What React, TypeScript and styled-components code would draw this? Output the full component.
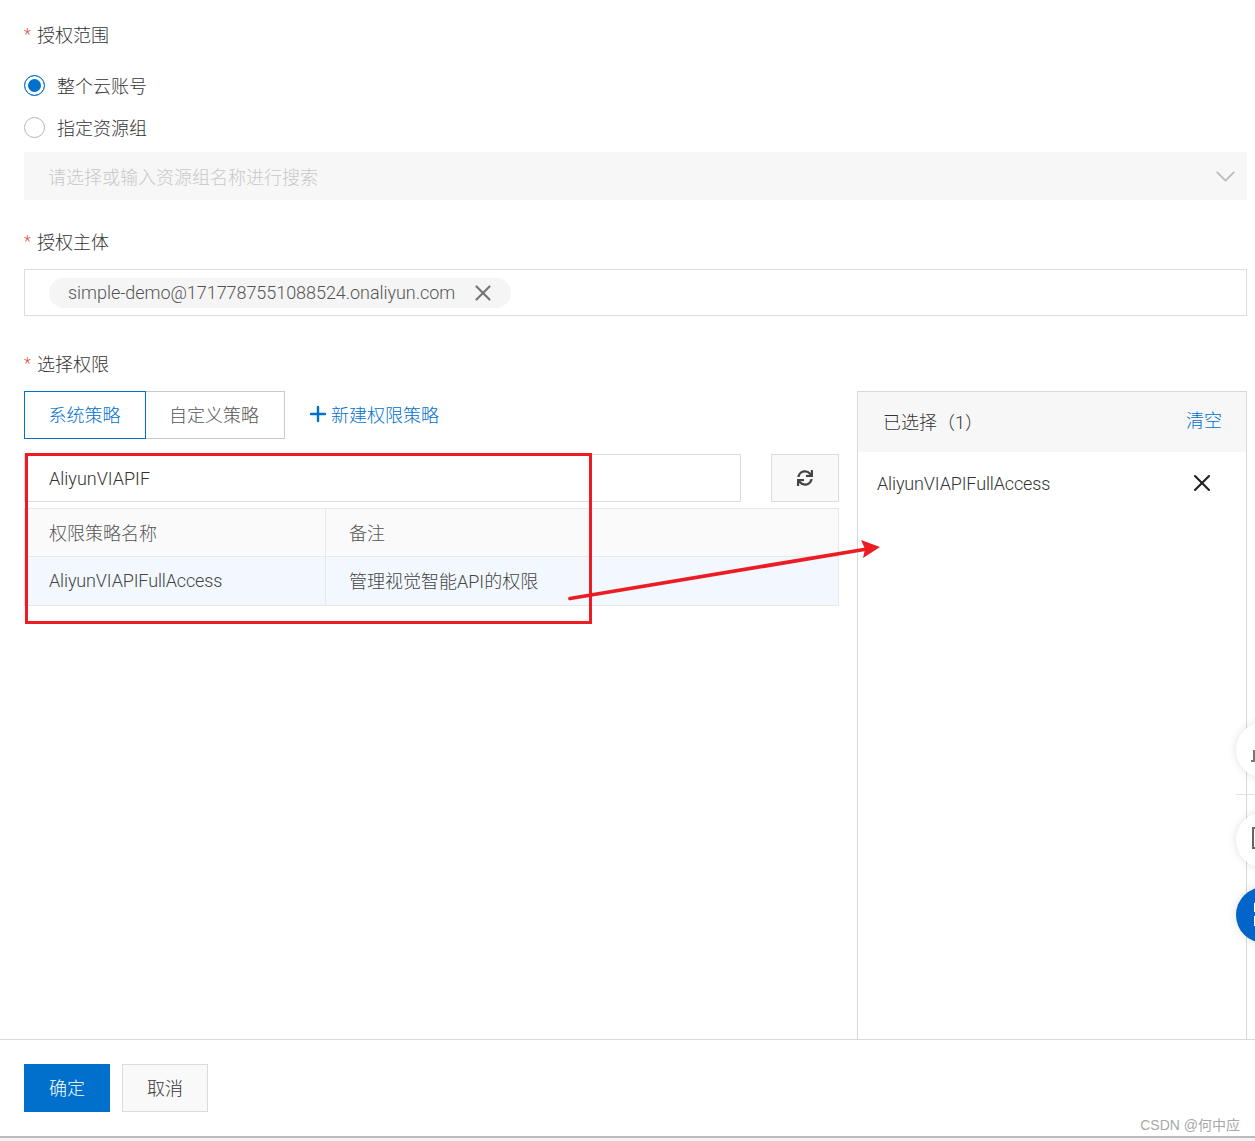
import React from "react";
import styled, { createGlobalStyle } from "styled-components";
import { ChevronDown, X, Plus } from "lucide-react";
import { FaSync } from "react-icons/fa";

const GlobalStyle = createGlobalStyle`
  html, body {
    margin: 0;
    padding: 0;
    background: #fff;
  }
  * { box-sizing: border-box; }
  body {
    font-family: Roboto, "Noto Sans CJK SC", sans-serif;
    font-size: 18px;
    font-weight: 300;
    color: #333;
  }
`;

export default function App() {
  return (
    <Page>
      <GlobalStyle />
      <Body>
        <FieldLabel>授权范围</FieldLabel>
        <RadioGroup>
          <RadioRow>
            <Radio $checked />
            整个云账号
          </RadioRow>
          <RadioRow>
            <Radio />
            指定资源组
          </RadioRow>
        </RadioGroup>
        <DisabledSelect>
          <SelectText>请选择或输入资源组名称进行搜索</SelectText>
          <ChevronDown size={33} strokeWidth={1.3} color="#bbb" />
        </DisabledSelect>

        <FieldLabel $top={30}>授权主体</FieldLabel>
        <TagInput>
          <Chip>
            <ChipText>simple-demo@1717787551088524.onaliyun.com</ChipText>
            <X size={26} strokeWidth={2} color="#777" />
          </Chip>
        </TagInput>

        <FieldLabel $top={36}>选择权限</FieldLabel>
        <PermissionArea>
          <LeftColumn>
            <TabRow>
              <Tab $active $width={122}>系统策略</Tab>
              <Tab $width={139}>自定义策略</Tab>
              <NewPolicyLink>
                <PlusIcon size={24} strokeWidth={2.4} />
                新建权限策略
              </NewPolicyLink>
            </TabRow>
            <SearchRow>
              <SearchInput>AliyunVIAPIF</SearchInput>
              <RefreshButton>
                <FaSync size={16} color="#444" />
              </RefreshButton>
            </SearchRow>
            <Table>
              <HeaderRow>
                <NameCell>权限策略名称</NameCell>
                <NoteCell>备注</NoteCell>
              </HeaderRow>
              <DataRow>
                <NameCell><Latin>AliyunVIAPIFullAccess</Latin></NameCell>
                <NoteCell>管理视觉智能API的权限</NoteCell>
              </DataRow>
            </Table>
          </LeftColumn>
          <SelectedPanel>
            <PanelHeader>
              <PanelTitle>已选择（1）</PanelTitle>
              <ClearLink>清空</ClearLink>
            </PanelHeader>
            <SelectedItem>
              <Latin>AliyunVIAPIFullAccess</Latin>
              <X size={28} strokeWidth={1.8} color="#222" />
            </SelectedItem>
          </SelectedPanel>
        </PermissionArea>
      </Body>
      <Footer>
        <PrimaryButton>确定</PrimaryButton>
        <CancelButton>取消</CancelButton>
      </Footer>
      <BottomStrip />

      {/* red markup drawn on top of the screenshot */}
      <RedBox />
      <ArrowLayer width="330" height="70" viewBox="0 0 330 70">
        <line x1="11" y1="60.5" x2="305" y2="11.5" stroke="#ed1c24" strokeWidth="3.8" strokeLinecap="round" />
        <polygon points="321,9 302,2 306,11 304,20" fill="#ed1c24" />
      </ArrowLayer>

      {/* floating help widgets cut off at the right edge */}
      <FloatCircle $top={722}>
        <svg width="19" height="56" viewBox="0 0 19 56">
          <rect x="17" y="28" width="2" height="11" fill="#777" />
          <rect x="15" y="38" width="4" height="2" fill="#777" />
        </svg>
      </FloatCircle>
      <FloatDivider />
      <FloatCircle $top={812}>
        <svg width="19" height="56" viewBox="0 0 19 56">
          <rect x="17" y="16" width="6" height="20" fill="none" stroke="#666" strokeWidth="2" />
        </svg>
      </FloatCircle>
      <FloatCircle $top={887} $blue>
        <svg width="19" height="56" viewBox="0 0 19 56">
          <rect x="18" y="16" width="4" height="9" fill="#fff" />
          <rect x="18" y="29" width="4" height="10" fill="#fff" />
        </svg>
      </FloatCircle>

      <Watermark>CSDN @何中应</Watermark>
    </Page>
  );
}

const Page = styled.div`
  position: relative;
  width: 1255px;
  height: 1141px;
  overflow: hidden;
  display: flex;
  flex-direction: column;
  background: #fff;
`;

const Body = styled.div`
  height: 1039px;
  padding: 23px 8px 0 24px;
  display: flex;
  flex-direction: column;
`;

const Latin = styled.span`
  letter-spacing: -0.14px;
`;

const ChipText = styled.span`
  letter-spacing: -0.05px;
`;

const FieldLabel = styled.div<{ $top?: number }>`
  margin-top: ${(p) => p.$top ?? 0}px;
  height: 24px;
  line-height: 26px;
  padding-left: 13px;
  position: relative;
  color: #333;

  &::before {
    content: "*";
    position: absolute;
    left: 0;
    top: -1px;
    color: #e84c3d;
    font-size: 16px;
  }
`;

const RadioGroup = styled.div`
  margin-top: 17px;
  display: flex;
  flex-direction: column;
`;

const RadioRow = styled.label`
  height: 42px;
  display: flex;
  align-items: center;
  gap: 12px;
  color: #333;
`;

const Radio = styled.span<{ $checked?: boolean }>`
  width: 21px;
  height: 21px;
  border-radius: 50%;
  border: 1px solid ${(p) => (p.$checked ? "#0070cc" : "#b5b5b5")};
  background: ${(p) => (p.$checked ? "#0070cc" : "#fff")};
  box-shadow: ${(p) => (p.$checked ? "inset 0 0 0 3px #fff" : "none")};
`;

const DisabledSelect = styled.div`
  margin-top: 4px;
  height: 48px;
  padding: 0 5px 0 24px;
  background: #f7f7f7;
  color: #c8c8c8;
  display: flex;
  align-items: center;
  justify-content: space-between;
`;

const SelectText = styled.span`
  margin-bottom: 1px;
`;

const TagInput = styled.div`
  margin-top: 15px;
  height: 47px;
  padding: 0 24px;
  border: 1px solid #dcdcdc;
  display: flex;
  align-items: center;
`;

const Chip = styled.div`
  height: 30px;
  padding: 0 15px 0 19px;
  border-radius: 15px;
  background: #f5f5f5;
  color: #555;
  display: flex;
  align-items: center;
  gap: 15px;
`;

const PermissionArea = styled.div`
  margin-top: 15px;
  flex: 1;
  display: flex;
  gap: 18px;
  min-height: 0;
`;

const LeftColumn = styled.div`
  width: 815px;
  display: flex;
  flex-direction: column;
`;

const TabRow = styled.div`
  height: 48px;
  display: flex;
  align-items: center;
`;

const Tab = styled.div<{ $active?: boolean; $width: number }>`
  width: ${(p) => p.$width}px;
  height: 48px;
  padding: 0 ${(p) => (p.$active ? 1 : 2)}px 2px 0;
  display: flex;
  align-items: center;
  justify-content: center;
  border: 1px solid ${(p) => (p.$active ? "#0070cc" : "#c9c9c9")};
  border-left-width: ${(p) => (p.$active ? 1 : 0)}px;
  color: ${(p) => (p.$active ? "#0070cc" : "#555")};
`;

const NewPolicyLink = styled.a`
  margin: 0 0 2px 21px;
  display: flex;
  align-items: center;
  color: #0070cc;
`;

const PlusIcon = styled(Plus)`
  margin-right: 1px;
`;

const SearchRow = styled.div`
  margin-top: 15px;
  display: flex;
  gap: 30px;
`;

const SearchInput = styled.div`
  width: 717px;
  height: 48px;
  padding-left: 24px;
  border: 1px solid #dcdcdc;
  display: flex;
  align-items: center;
  color: #333;
`;

const RefreshButton = styled.div`
  width: 68px;
  height: 48px;
  border: 1px solid #dcdcdc;
  background: #f9f9f9;
  display: flex;
  align-items: center;
  justify-content: center;
`;

const Table = styled.div`
  margin-top: 6px;
  border: 1px solid #e8e8e8;
  border-bottom: 0;
`;

const HeaderRow = styled.div`
  height: 48px;
  display: flex;
  background: #fafafa;
  color: #555;
  border-bottom: 1px solid #e8e8e8;
`;

const DataRow = styled.div`
  height: 49px;
  display: flex;
  background: #f2f8fe;
  color: #444;
  border-bottom: 1px solid #e8e8e8;
`;

const NameCell = styled.div`
  width: 301px;
  padding: 0 0 2px 24px;
  display: flex;
  align-items: center;
  border-right: 1px solid #e8e8e8;
`;

const NoteCell = styled.div`
  flex: 1;
  padding: 0 0 2px 23px;
  display: flex;
  align-items: center;
`;

const SelectedPanel = styled.div`
  width: 390px;
  border: 1px solid #d9d9d9;
  border-bottom: 0;
`;

const PanelHeader = styled.div`
  height: 60px;
  padding: 0 24px 2px 25px;
  background: #f7f7f7;
  display: flex;
  align-items: center;
  justify-content: space-between;
`;

const PanelTitle = styled.span`
  color: #333;
`;

const ClearLink = styled.a`
  color: #0070cc;
  margin-top: -4px;
`;

const SelectedItem = styled.div`
  margin-top: 8px;
  height: 48px;
  padding: 0 30px 2px 19px;
  display: flex;
  align-items: center;
  justify-content: space-between;
  color: #333;
`;

const Footer = styled.div`
  height: 97px;
  border-top: 1px solid #d9d9d9;
  padding: 24px 24px 0;
  display: flex;
  align-items: flex-start;
  gap: 12px;
`;

const PrimaryButton = styled.button`
  width: 86px;
  height: 48px;
  padding: 0 0 3px;
  border: 0;
  background: #0070cc;
  color: #fff;
  font: inherit;
`;

const CancelButton = styled.button`
  width: 86px;
  height: 48px;
  padding: 0 0 3px;
  border: 1px solid #dcdcdc;
  background: #f9f9f9;
  color: #333;
  font: inherit;
`;

const BottomStrip = styled.div`
  flex: 1;
  border-top: 2px solid #bdbdbd;
  background: #f4f4f4;
`;

const RedBox = styled.div`
  position: absolute;
  left: 25px;
  top: 453px;
  width: 567px;
  height: 171px;
  border: 3px solid #ed1c24;
`;

const ArrowLayer = styled.svg`
  position: absolute;
  left: 559px;
  top: 538px;
`;

const FloatCircle = styled.div<{ $top: number; $blue?: boolean }>`
  position: absolute;
  left: 1236px;
  top: ${(p) => p.$top}px;
  width: 56px;
  height: 56px;
  border-radius: 50%;
  background: ${(p) => (p.$blue ? "#0064c8" : "#fff")};
  box-shadow: 0 0 10px rgba(0, 0, 0, 0.12);
`;

const FloatDivider = styled.div`
  position: absolute;
  left: 1236px;
  top: 794px;
  width: 19px;
  height: 1px;
  background: #e3e3e3;
`;

const Watermark = styled.div`
  position: absolute;
  right: 15px;
  top: 1115px;
  font-family: "Liberation Sans", "Noto Sans CJK SC", sans-serif;
  font-size: 14px;
  font-weight: 400;
  line-height: 20px;
  color: #a8a8a8;
`;
